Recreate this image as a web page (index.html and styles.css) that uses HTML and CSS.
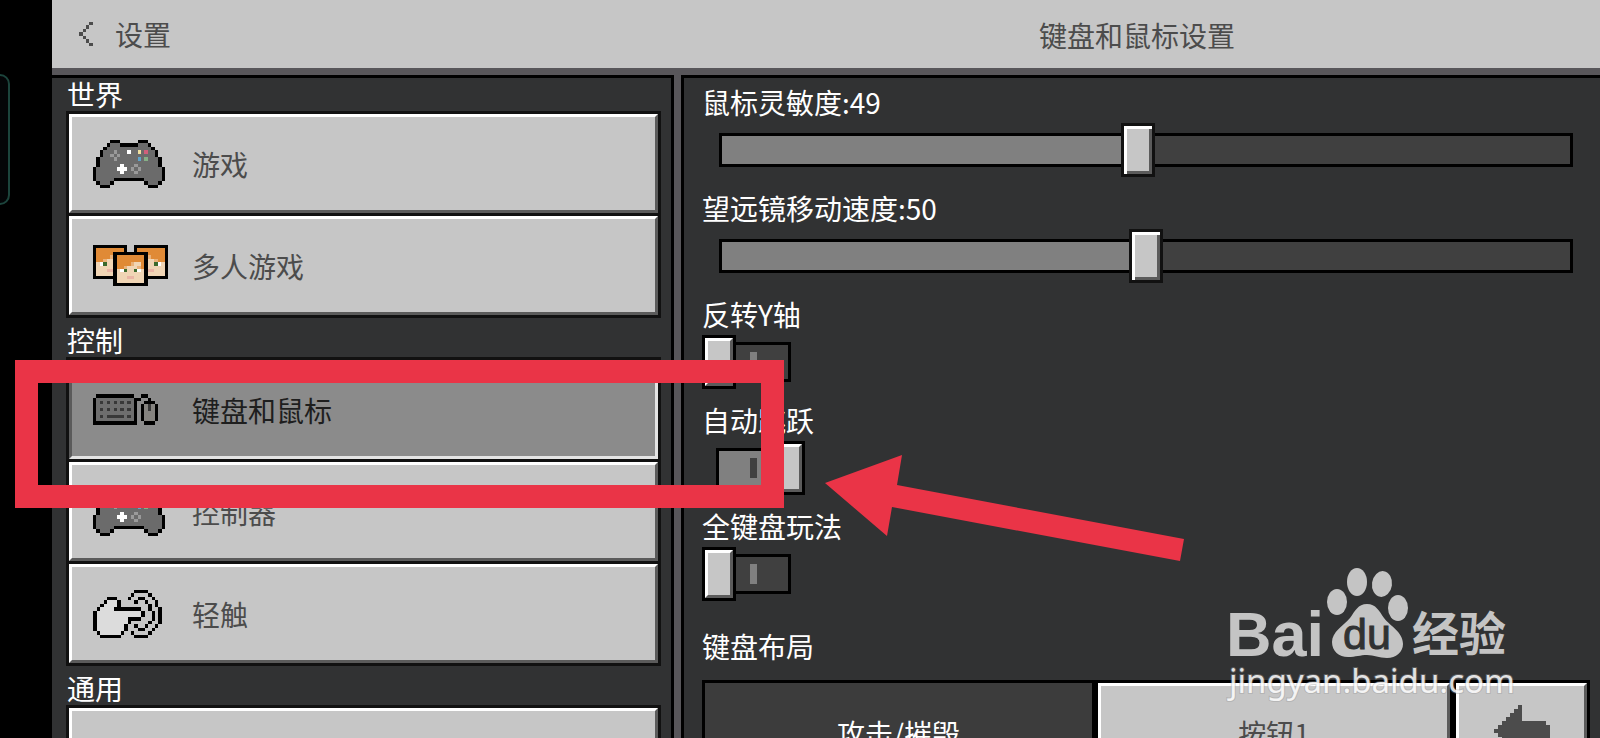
FILE: index.html
```html
<!doctype html>
<html lang="zh-CN">
<head>
    <meta charset="UTF-8">
    <meta name="viewport" content="width=device-width, initial-scale=1.0">
    <title>键盘和鼠标设置</title>
    <link rel="stylesheet" href="styles.css">
</head>
<body>
<div class="notch"></div>
<div class="screen">
    <header>
        <button class="back" type="button"><svg class="icon" data-icon="back" width="14" height="24"></svg>设置</button>
        <h1>键盘和鼠标设置</h1>
    </header>
    <div class="panels">
        <nav>
            <section>
                <h2>世界</h2>
                <div class="list">
                    <button type="button"><span><svg class="icon" data-icon="controller" width="72" height="48"></svg></span>游戏</button>
                    <button type="button"><span><svg class="icon" data-icon="players" width="75" height="41"></svg></span>多人游戏</button>
                </div>
            </section>
            <section>
                <h2>控制</h2>
                <div class="list">
                    <button class="active" type="button"><span><svg class="icon" data-icon="keyboard" width="65" height="31"></svg></span>键盘和鼠标</button>
                    <button type="button"><span><svg class="icon" data-icon="controller" width="72" height="48"></svg></span>控制器</button>
                    <button type="button"><span><svg class="icon" data-icon="touch" width="69" height="48"></svg></span>轻触</button>
                </div>
            </section>
            <section>
                <h2>通用</h2>
                <div class="list">
                    <button type="button" aria-label="通用"></button>
                </div>
            </section>
        </nav>
        <main>
            <div class="setting">
                <label for="sensitivity">鼠标灵敏度:49</label>
                <input id="sensitivity" class="slider" type="range" min="0" max="100" value="49" style="--fill: 49%">
            </div>
            <div class="setting">
                <label for="spyglass">望远镜移动速度:50</label>
                <input id="spyglass" class="slider" type="range" min="0" max="100" value="50" style="--fill: 50%">
            </div>
            <div class="setting">
                <label for="invert">反转Y轴</label>
                <input id="invert" class="toggle" type="checkbox">
            </div>
            <div class="setting">
                <label for="jump">自动跳跃</label>
                <input id="jump" class="toggle" type="checkbox" checked>
            </div>
            <div class="setting">
                <label for="full">全键盘玩法</label>
                <input id="full" class="toggle" type="checkbox">
            </div>
            <h3>键盘布局</h3>
            <div class="keymap">
                <div class="action">攻击/摧毁</div>
                <div class="key"><button type="button">按钮1</button></div>
                <div class="key"><button type="button" aria-label="重置"><svg class="icon" data-icon="reset" width="56" height="56"></svg></button></div>
            </div>
        </main>
    </div>
</div>

<!-- 标注 -->
<div class="mark-box"></div>
<svg class="mark-arrow" width="360" height="108" viewBox="0 0 360 108">
    <path fill="#ea3447" d="M0 28L77 0L72 30L359 84L355 106L67 52L62 81Z"/>
</svg>

<!-- 水印 -->
<svg class="watermark" width="290" height="150" viewBox="0 0 290 150">
    <g fill="#c4c4c4">
        <text class="wm-latin" x="1" y="96">Bai</text>
        <ellipse cx="112" cy="42" rx="10" ry="13"/>
        <ellipse cx="132" cy="22" rx="10" ry="14"/>
        <ellipse cx="157" cy="24" rx="10" ry="13" transform="rotate(8 157 24)"/>
        <ellipse cx="173" cy="48" rx="10" ry="13"/>
        <path d="M142 44C151 44 154 51 159 58C165 66 178 72 178 84C178 92 171 98 162 98C154 98 149 95 142 95C135 95 131 97 123 97C114 97 107 91 107 82C107 72 118 66 125 58C130 51 133 44 142 44Z"/>
        <text class="wm-cn" x="187" y="91">经验</text>
    </g>
    <text class="wm-du" x="118" y="89">du</text>
    <text class="wm-url" x="4" y="133">jingyan.baidu.com</text>
</svg>

<script src="icons.js"></script>
</body>
</html>
```

FILE: styles.css
```css
*, *::before, *::after {
    box-sizing: border-box;
    margin: 0;
    padding: 0;
}

body {
    display: flex;
    height: 100vh;
    overflow: hidden;
    position: relative;
    background: #000;
    color: #fff;
    font-family: "Noto Sans CJK SC", sans-serif;
    font-size: 28px;
}

button {
    font: inherit;
    color: #4c4c4c;
    background: #c6c6c6;
    border: 0;
}

h1, h2, h3 {
    font-size: 28px;
    font-weight: 400;
}

.icon {
    display: block;
    shape-rendering: crispEdges;
}

/* 左侧黑边 */
.notch {
    flex: none;
    width: 52px;
}

.notch::before {
    content: "";
    position: absolute;
    left: -12px;
    top: 74px;
    width: 22px;
    height: 131px;
    border: 2px solid #1c443c;
    border-radius: 10px;
    background: #040507;
}

.screen {
    flex: 1;
    min-width: 0;
    display: flex;
    flex-direction: column;
    background: #58565a;
}

header {
    display: flex;
    height: 68px;
    flex: none;
    background: #c6c6c6;
    color: #4c4c4c;
}

.back {
    display: flex;
    align-items: center;
    gap: 22px;
    width: 622px;
    padding-left: 27px;
}

h1 {
    flex: 1;
    line-height: 70px;
    text-align: center;
}

.panels {
    flex: 1;
    min-height: 0;
    display: flex;
    gap: 7px;
    margin-top: 7px;
}

nav, main {
    background: #313233;
    border-top: 3px solid #000;
    overflow: hidden;
}

nav {
    flex: none;
    width: 622px;
    padding: 0 10px 0 14px;
    border-right: 3px solid #000;
}

section {
    margin-bottom: 6px;
}

h2 {
    padding-left: 1px;
    line-height: 33px;
}

.list {
    display: grid;
    gap: 3px;
    border: 3px solid #111;
    background: #111;
}

.list button {
    display: flex;
    align-items: center;
    height: 99px;
    padding-left: 21px;
}

.list button, .key button, .toggle::after {
    border: 3px solid;
    border-color: #fff #5b5b5b #5b5b5b #fff;
}

.list span {
    width: 99px;
}

.list .active {
    background: #8b8b8b;
    border-color: #5b5b5b #e4e4e4 #e4e4e4 #5b5b5b;
    color: #1e1e1e;
}

main {
    flex: 1;
    min-width: 0;
    padding: 0 10px 0 18px;
    border-left: 3px solid #000;
}

.setting {
    padding-top: 4px;
    margin-bottom: 7px;
}

.setting label {
    display: block;
    line-height: 41px;
}

.slider {
    display: block;
    width: calc(100% - 34px);
    height: 54px;
    margin: 0 17px;
    appearance: none;
    background: none;
}

.slider::-webkit-slider-runnable-track {
    height: 34px;
    border: 3px solid #000;
    background: linear-gradient(to right, #808080 var(--fill), #404040 var(--fill));
}

.slider::-webkit-slider-thumb {
    appearance: none;
    box-sizing: border-box;
    width: 34px;
    height: 54px;
    margin-top: -13px;
    border: 3px solid #111;
    background: #c6c6c6;
    box-shadow: inset 3px 3px #fff, inset -3px -3px #5b5b5b;
}

.toggle {
    display: block;
    position: relative;
    width: 103px;
    height: 54px;
    appearance: none;
}

.toggle::before {
    content: "";
    display: block;
    width: 75px;
    height: 40px;
    margin: 0 14px;
    border: 3px solid #000;
    background: linear-gradient(#808080, #808080) center / 7px 20px no-repeat #404040;
    position: relative;
    top: 7px;
}

.toggle::after {
    content: "";
    position: absolute;
    top: 3px;
    left: 3px;
    width: 28px;
    height: 48px;
    background: #c6c6c6;
    outline: 3px solid #000;
}

.toggle:checked::before {
    background: linear-gradient(#404040, #404040) center / 7px 20px no-repeat #808080;
}

.toggle:checked::after {
    left: auto;
    right: 3px;
}

h3 {
    padding-top: 4px;
    line-height: 68px;
}

.keymap {
    display: grid;
    grid-template-columns: 1fr 358px 137px;
    height: 105px;
}

.action, .key {
    display: grid;
    border: 3px solid #000;
}

.action {
    place-items: center;
    background: #3c3c3c;
}

.key button {
    display: grid;
    place-items: center;
}

.mark-box {
    position: absolute;
    left: 15px;
    top: 360px;
    width: 769px;
    height: 148px;
    border: 23px solid #ea3447;
}

.mark-arrow {
    position: absolute;
    left: 825px;
    top: 455px;
}

.watermark {
    position: absolute;
    right: 85px;
    top: 560px;
}

.wm-latin {
    font: bold 63px "Liberation Sans", sans-serif;
}

.wm-cn {
    font: bold 47px "Noto Sans CJK SC", sans-serif;
}

.wm-du {
    font: 43px "Liberation Sans", sans-serif;
    fill: #313233;
    stroke: #313233;
}

.wm-url {
    font: 33px "Noto Sans", sans-serif;
    fill: #fff;
    fill-opacity: 0.85;
    stroke: #999;
    stroke-width: 2px;
    stroke-opacity: 0.4;
    paint-order: stroke;
}
```

FILE: icons.js
```js
//像素图标，每个字符是一个像素
var colors = {
    K: '#000', g: '#6b6b6b', l: '#9a9a9a', w: '#fff', y: '#efe0a0', r: '#d0607a', b: '#5fa5cc', e: '#86b086',
    o: '#e08a36', a: '#eab27a', s: '#f0d5b5', G: '#3c6a2c', p: '#eab5a5',
    d: '#6e6e6e', k: '#383838', m: '#85837f', W: '#dcdcdc', t: '#4c4c4c'
};

var icons = {
    back: [
        '...t',
        '..t.',
        '.t..',
        't...',
        '.t..',
        '..t.',
        '...t'
    ],
    controller: [
        '.....KKK.....KKK.....',
        '....KgggKKKKKgggK....',
        '...KgggggggggggggK...',
        '..KggglgggwggygrggK..',
        '..KgglglggggggggggK..',
        '.KgggglggggggbgegggK.',
        '.KgggggggggggggggggK.',
        '.KggggggwggglggggggK.',
        'KggggggwwwglglggggggK',
        'KgggggggwggglgggggggK',
        'KgggggggggggggggggggK',
        'KgggggKKKKKKKKKgggggK',
        '.KgggK.........KgggK.',
        '..KKK...........KKK..'
    ],
    players: [
        'KKKKKKKKKK..KKKKKKKKKK',
        'KooooooooK..KooooooooK',
        'KoooooKKKKKKKKKKoooooK',
        'KooooaKooooooooKaooooK',
        'KooassKooooooooKssaooK',
        'KswGssKooooassoKssGwsK',
        'KsssssKooasssaoKsssssK',
        'KsssppKswGssGwsKppsssK',
        'KsssssKssssssssKsssssK',
        'KKKKKKKsssppsssKKKKKKK',
        '......KssssssssK......',
        '......KKKKKKKKKK......'
    ],
    keyboard: [
        '.KKKKKKKKKKK..KK...',
        'KdddddddddddKK..K..',
        'KdkdkdkdkdkdK..KKK.',
        'KdddddddddddK.KmkmK',
        'KdkdkdkdkdkdK.KmkmK',
        'KdddddddddddK.KmmmK',
        'KdkdkkkkkdkdK.KmmmK',
        'KdddddddddddK.KmmmK',
        'KKKKKKKKKKKKK..KKK.'
    ],
    touch: [
        '............KKKK....',
        '...........K....K...',
        '....KKK...K..KK..K..',
        '...KWWWK....K..K..K.',
        '..KWWWWK........K.K.',
        '.KWWWWKKKKKKKK..K..K',
        'KWWWWWWWWWWWWWK..K.K',
        'KWWWWWWWWWWWWWK..K.K',
        'KWWWWWWWWWKKKK...K.K',
        'KWWWWWWWWWK.....K..K',
        'KWWWWWWWWK..K..K..K.',
        'KWWWWWWWWK...KK..K..',
        '.KWWWWWWK..K....K...',
        '..KKKKKK....KKKK....'
    ],
    reset: [
        '......t.......',
        '.....tt.......',
        '....ttt.......',
        '...tttt.......',
        '..ttttttttttt.',
        '.ttttttttttttt',
        'tttttttttttttt',
        '.ttttttttttttt',
        '..tttttttttttt',
        '...tttt...tttt',
        '....ttt....ttt',
        '.....tt....ttt',
        '......t...ttt.',
        '.........ttt..'
    ]
};

document.querySelectorAll('.icon').forEach(function (svg) {
    var rows = icons[svg.dataset.icon];
    var html = '';
    svg.setAttribute('viewBox', '0 0 ' + rows[0].length + ' ' + rows.length);
    rows.forEach(function (row, y) {
        for (var x = 0; x < row.length; x++) {
            if (row[x] !== '.') {
                html += '<rect x="' + x + '" y="' + y + '" width="1" height="1" fill="' + colors[row[x]] + '"/>';
            }
        }
    });
    svg.innerHTML = html;
});
```
